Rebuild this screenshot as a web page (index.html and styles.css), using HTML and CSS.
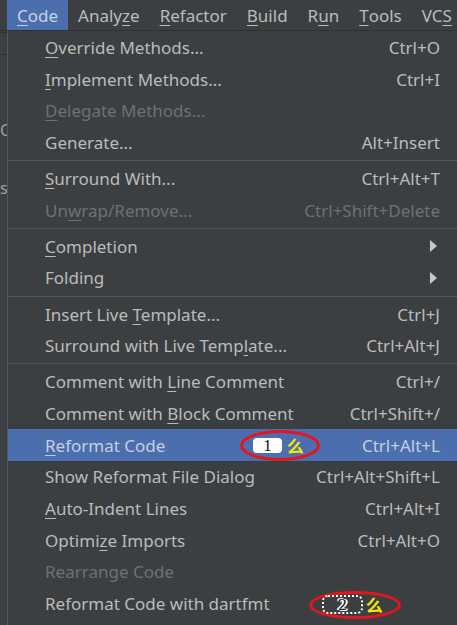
FILE: index.html
```html
<!DOCTYPE html>
<html>
<head>
<meta charset="utf-8">
<link rel="stylesheet" href="styles.css">
</head>
<body>
<div class="menubar">
  <span class="mb-item active"><u>C</u>ode</span>
  <span class="mb-item">Analy<u>z</u>e</span>
  <span class="mb-item"><u>R</u>efactor</span>
  <span class="mb-item"><u>B</u>uild</span>
  <span class="mb-item">R<u>u</u>n</span>
  <span class="mb-item"><u>T</u>ools</span>
  <span class="mb-item">VC<u>S</u></span>
</div>
<div class="main">
  <div class="strip">
    <div class="strip-line"></div>
    <div class="strip-line second"></div>
    <span class="strip-c">C</span>
    <span class="strip-s">s</span>
  </div>
  <div class="popup">
    <div class="row"><span class="label"><u>O</u>verride Methods...</span><span class="key">Ctrl+O</span></div>
    <div class="row"><span class="label"><u>I</u>mplement Methods...</span><span class="key">Ctrl+I</span></div>
    <div class="row disabled"><span class="label"><u>D</u>elegate Methods...</span></div>
    <div class="row"><span class="label">Generate...</span><span class="key">Alt+Insert</span></div>
    <div class="sep"></div>
    <div class="row"><span class="label"><u>S</u>urround With...</span><span class="key">Ctrl+Alt+T</span></div>
    <div class="row disabled"><span class="label">Un<u>w</u>rap/Remove...</span><span class="key">Ctrl+Shift+Delete</span></div>
    <div class="sep"></div>
    <div class="row"><span class="label"><u>C</u>ompletion</span><span class="arrow"></span></div>
    <div class="row"><span class="label">Folding</span><span class="arrow"></span></div>
    <div class="sep"></div>
    <div class="row"><span class="label">Insert Live <u>T</u>emplate...</span><span class="key">Ctrl+J</span></div>
    <div class="row"><span class="label">Surround with Live Temp<u>l</u>ate...</span><span class="key">Ctrl+Alt+J</span></div>
    <div class="sep"></div>
    <div class="row"><span class="label">Comment with <u>L</u>ine Comment</span><span class="key">Ctrl+/</span></div>
    <div class="row"><span class="label">Comment with <u>B</u>lock Comment</span><span class="key">Ctrl+Shift+/</span></div>
    <div class="row selected"><span class="label"><u>R</u>eformat Code</span><span class="key">Ctrl+Alt+L</span>
      <span class="mark mark1"><span class="blob white">1</span><span class="blob yellow">&#x4E48;</span></span>
    </div>
    <div class="row"><span class="label">Show Reformat File Dialog</span><span class="key">Ctrl+Alt+Shift+L</span></div>
    <div class="row"><span class="label"><u>A</u>uto-Indent Lines</span><span class="key">Ctrl+Alt+I</span></div>
    <div class="row"><span class="label">Optimi<u>z</u>e Imports</span><span class="key">Ctrl+Alt+O</span></div>
    <div class="row disabled"><span class="label">Rearrange Code</span></div>
    <div class="row"><span class="label">Reformat Code with dartfmt</span>
      <span class="mark mark2"><span class="blob white">2</span><span class="blob yellow">&#x4E48;</span></span>
    </div>
  </div>
</div>
</body>
</html>
```

FILE: styles.css
```css
html, body {
  margin: 0;
  padding: 0;
}
body {
  background: #3c3f41;
  font-family: "Noto Sans", "Open Sans", sans-serif;
  font-size: 17px;
  color: #bbbbbb;
  width: 457px;
  height: 625px;
  overflow: hidden;
}
u {
  text-decoration: underline;
  text-underline-offset: 3px;
  text-decoration-thickness: 1px;
}
.menubar {
  display: flex;
  height: 30px;
  align-items: stretch;
  padding-left: 7px;
  border-bottom: 1px solid #2f3133;
}
.mb-item {
  display: flex;
  align-items: center;
  padding: 0 10px;
  font-size: 17px;
  line-height: 1;
}
.mb-item.active {
  background: #4b6eaf;
  color: #c9d2e3;
}
.main {
  display: flex;
  height: 594px;
}
.strip {
  width: 7px;
  position: relative;
  overflow: hidden;
  background: #3c3f41;
  border-right: 1px solid #555759;
  flex: none;
}
.strip-line {
  height: 1px;
  background: #2b2d2f;
  margin-top: 1px;
}
.strip-line.second {
  margin-top: 21px;
}
.strip-c {
  position: absolute;
  top: 88px;
  left: 0;
  font-size: 16px;
  color: #a0a0a0;
}
.strip-s {
  position: absolute;
  top: 146px;
  left: 0;
  font-size: 16px;
  color: #a0a0a0;
}
.popup {
  flex: 1;
  background: #3c3f41;
  padding-top: 1px;
}
.row {
  position: relative;
  display: flex;
  align-items: center;
  justify-content: space-between;
  height: 31.6px;
  padding: 0 17px 0 37px;
  white-space: nowrap;
}
.row.selected {
  background: #4b6eaf;
  height: 32px;
  color: #c6cfe0;
}
.row.disabled {
  color: #707070;
}
.sep {
  height: 4.5px;
  display: flex;
  align-items: center;
}
.sep::before {
  content: "";
  flex: 1;
  height: 1px;
  background: #515658;
}
.arrow {
  width: 0;
  height: 0;
  border-top: 6px solid transparent;
  border-bottom: 6px solid transparent;
  border-left: 7px solid #c8c8c8;
  margin-right: 3px;
}
.mark {
  position: absolute;
  border: 3px solid #e8141c;
  border-radius: 50%;
  display: flex;
  align-items: center;
  justify-content: center;
  gap: 2px;
  box-sizing: border-box;
}
.mark1 {
  left: 232px;
  top: 1px;
  width: 80px;
  height: 31px;
}
.mark2 {
  left: 301px;
  top: 3px;
  width: 92px;
  height: 28px;
}
.blob {
  font-family: "Liberation Serif", serif;
  font-size: 17px;
  line-height: 15px;
  padding: 0 3px;
}
.blob.white {
  background: #ffffff;
  color: #111111;
  border-radius: 4px;
  padding: 0 10px;
}
.mark2 .blob.white {
  background: transparent;
  color: #222;
  text-shadow: 1px 1px 0 #fff, -1px -1px 0 #fff, 2px 0 0 #fff, -2px 0 0 #fff;
  padding: 0 14px;
  outline: 2px dotted #ffffff;
}
.blob.yellow {
  color: #f2e60a;
  font-family: "Noto Sans CJK SC", sans-serif;
  font-size: 17px;
  font-weight: bold;
}
```
